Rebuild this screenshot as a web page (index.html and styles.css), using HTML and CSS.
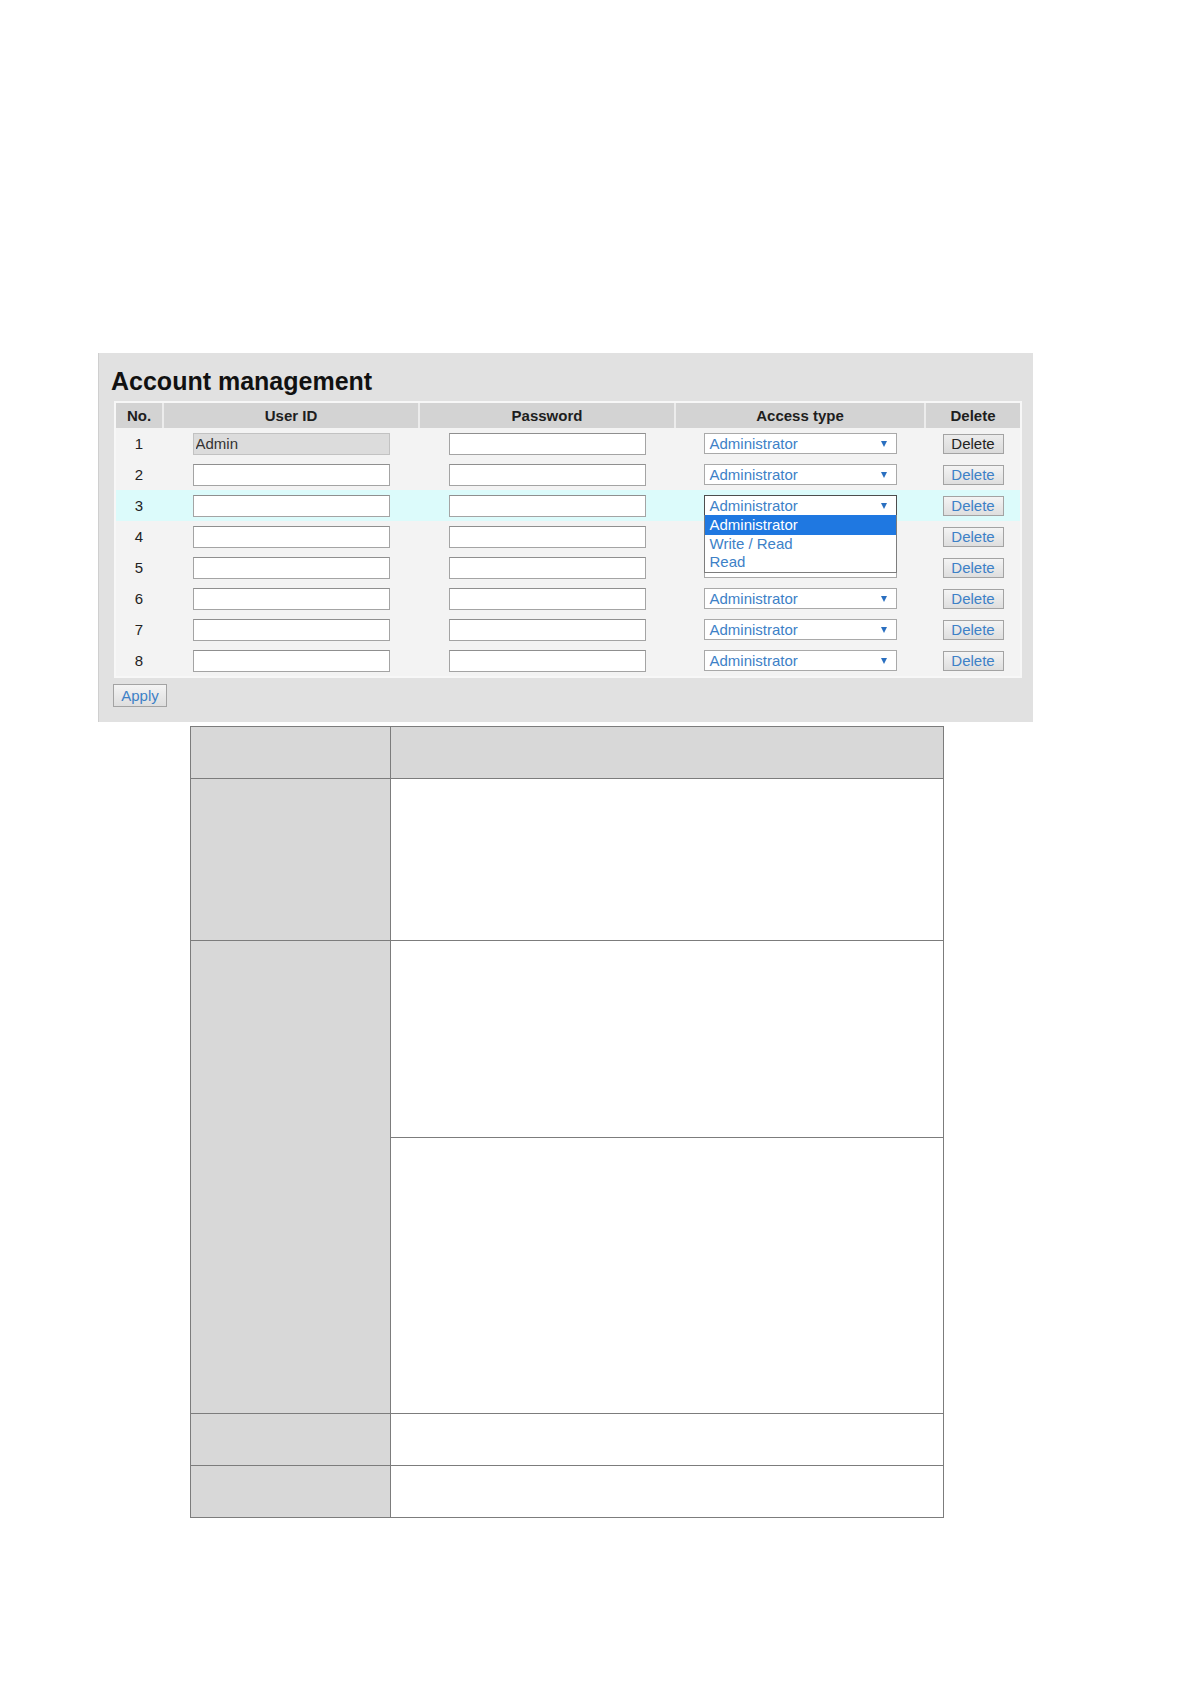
FILE: index.html
```html
<!DOCTYPE html>
<html lang="en">
<head>
<meta charset="utf-8">
<title>Account management</title>
<link rel="stylesheet" href="styles.css">
</head>
<body>
<div class="page">
  <section class="panel">
    <h1 class="title">Account management</h1>
    <div class="acct">
      <div class="row head">
        <div class="hc">No.</div>
        <div class="hc">User ID</div>
        <div class="hc">Password</div>
        <div class="hc">Access type</div>
        <div class="hc">Delete</div>
      </div>
      <div class="row">
        <div class="no">1</div>
        <div class="cell"><input class="inp dis" type="text" value="Admin" readonly></div>
        <div class="cell"><input class="inp" type="password" readonly></div>
        <div class="cell"><div class="sel"><span>Administrator</span><i class="arr"></i></div></div>
        <div class="cell"><button class="btn dark">Delete</button></div>
      </div>
      <div class="row">
        <div class="no">2</div>
        <div class="cell"><input class="inp" type="text" readonly></div>
        <div class="cell"><input class="inp" type="password" readonly></div>
        <div class="cell"><div class="sel"><span>Administrator</span><i class="arr"></i></div></div>
        <div class="cell"><button class="btn">Delete</button></div>
      </div>
      <div class="row hl">
        <div class="no">3</div>
        <div class="cell"><input class="inp" type="text" readonly></div>
        <div class="cell"><input class="inp" type="password" readonly></div>
        <div class="cell">
          <div class="sel open"><span>Administrator</span><i class="arr"></i>
            <ul class="menu">
              <li class="opt on">Administrator</li>
              <li class="opt">Write / Read</li>
              <li class="opt">Read</li>
            </ul>
          </div>
        </div>
        <div class="cell"><button class="btn">Delete</button></div>
      </div>
      <div class="row">
        <div class="no">4</div>
        <div class="cell"><input class="inp" type="text" readonly></div>
        <div class="cell"><input class="inp" type="password" readonly></div>
        <div class="cell"><div class="sel covered"></div></div>
        <div class="cell"><button class="btn">Delete</button></div>
      </div>
      <div class="row">
        <div class="no">5</div>
        <div class="cell"><input class="inp" type="text" readonly></div>
        <div class="cell"><input class="inp" type="password" readonly></div>
        <div class="cell"><div class="sel covered"></div></div>
        <div class="cell"><button class="btn">Delete</button></div>
      </div>
      <div class="row">
        <div class="no">6</div>
        <div class="cell"><input class="inp" type="text" readonly></div>
        <div class="cell"><input class="inp" type="password" readonly></div>
        <div class="cell"><div class="sel"><span>Administrator</span><i class="arr"></i></div></div>
        <div class="cell"><button class="btn">Delete</button></div>
      </div>
      <div class="row">
        <div class="no">7</div>
        <div class="cell"><input class="inp" type="text" readonly></div>
        <div class="cell"><input class="inp" type="password" readonly></div>
        <div class="cell"><div class="sel"><span>Administrator</span><i class="arr"></i></div></div>
        <div class="cell"><button class="btn">Delete</button></div>
      </div>
      <div class="row">
        <div class="no">8</div>
        <div class="cell"><input class="inp" type="text" readonly></div>
        <div class="cell"><input class="inp" type="password" readonly></div>
        <div class="cell"><div class="sel"><span>Administrator</span><i class="arr"></i></div></div>
        <div class="cell"><button class="btn">Delete</button></div>
      </div>
    </div>
    <button class="btn apply">Apply</button>
  </section>

  <table class="desc">
    <tr class="r-head"><td class="k"></td><td class="v"></td></tr>
    <tr class="r-a"><td class="k"></td><td class="v"></td></tr>
    <tr class="r-b"><td class="k" rowspan="2"></td><td class="v"></td></tr>
    <tr class="r-c"><td class="v"></td></tr>
    <tr class="r-d"><td class="k"></td><td class="v"></td></tr>
    <tr class="r-d"><td class="k"></td><td class="v"></td></tr>
  </table>
</div>
</body>
</html>
```

FILE: styles.css
```css
* { box-sizing: border-box; }

html, body {
  margin: 0;
  padding: 0;
  background: #ffffff;
}

body {
  font-family: "Liberation Sans", Arial, sans-serif;
  color: #222222;
}

.page {
  padding: 353px 0 0 98px;
  width: 1191px;
  min-height: 1684px;
}

/* ---------- grey panel ---------- */
.panel {
  width: 935px;
  height: 369px;
  background: #e1e1e1;
  border-left: 1px solid #cfcfcf;
  padding: 13px 0 15px 14px;
}

.title {
  margin: 0 0 5px -2px;
  font-size: 25px;
  line-height: 30px;
  font-weight: bold;
  color: #111111;
}

.acct {
  width: 908px;
  margin-left: 1px;
  border: 2px solid #f7f7f7;
  background: #f3f3f3;
}

.row {
  display: grid;
  grid-template-columns: 46px 254px 254px 248px 94px;
  column-gap: 2px;
  height: 31px;
  align-items: center;
  font-size: 15px;
}

.row.head {
  height: 25px;
  background: #ececec;
}

.hc {
  height: 25px;
  line-height: 25px;
  background: #d3d3d3;
  text-align: center;
  font-weight: bold;
  font-size: 15px;
  color: #1e1e1e;
}

.row.hl { background: #dcfbfb; }

.no {
  text-align: center;
  color: #222222;
}

.cell {
  display: flex;
  justify-content: center;
  align-items: center;
}

.inp {
  appearance: none;
  width: 197px;
  height: 22px;
  margin: 0;
  padding: 0 0 0 2px;
  border: 1px solid #a4a4a4;
  border-top-color: #8f8f8f;
  background: #ffffff;
  font-family: "Liberation Sans", Arial, sans-serif;
  font-size: 15px;
  color: #333333;
  outline: none;
}

.inp.dis {
  background: #dcdcdc;
  border-color: #c2c2c2;
}

/* select look-alike */
.sel {
  position: relative;
  width: 193px;
  height: 21px;
  border: 1px solid #a9a9a9;
  background: #ffffff;
  display: flex;
  justify-content: space-between;
  align-items: center;
  padding: 0 9px 0 5px;
  color: #3d81c7;
  font-size: 15px;
}

.sel.open { border-color: #4d4d4d; }

.arr {
  width: 0;
  height: 0;
  border-left: 3.5px solid transparent;
  border-right: 3.5px solid transparent;
  border-top: 6px solid #2a6fc0;
}

.menu {
  position: absolute;
  left: -1px;
  top: 100%;
  width: 193px;
  height: 58px;
  margin: 0;
  padding: 0;
  list-style: none;
  background: #ffffff;
  border: 1px solid #7d7d7d;
  border-top: none;
  z-index: 5;
}

.opt {
  height: 18px;
  line-height: 17px;
  padding-left: 5px;
  color: #3d81c7;
  font-size: 15px;
}

.opt.on {
  height: 20px;
  line-height: 19px;
  background: #1f78e1;
  color: #ffffff;
}

/* buttons */
.btn {
  appearance: none;
  width: 61px;
  height: 20px;
  margin: 0;
  padding: 0;
  border: 1px solid #a3a3a3;
  background: linear-gradient(#f4f4f4, #dedede);
  font-family: "Liberation Sans", Arial, sans-serif;
  font-size: 15px;
  line-height: 18px;
  color: #3d81c7;
}

.btn.dark {
  color: #222222;
  background: linear-gradient(#ececec, #dadada);
}

.apply {
  display: block;
  width: 54px;
  height: 23px;
  margin-top: 6px;
  margin-left: 0;
}

/* ---------- description table ---------- */
.desc {
  margin: 4px 0 0 92px;
  width: 754px;
  border-collapse: collapse;
}

.desc td {
  border: 1px solid #7c7c7c;
  padding: 0;
}

.desc .k {
  width: 200px;
  background: #d8d8d8;
}

.desc .v { background: #ffffff; }

.desc .r-head .v { background: #d8d8d8; }

.r-head td { height: 52px; }
.r-a td { height: 162px; }
.r-b td.v { height: 197px; }
.r-c td { height: 276px; }
.r-d td { height: 52px; }
```
